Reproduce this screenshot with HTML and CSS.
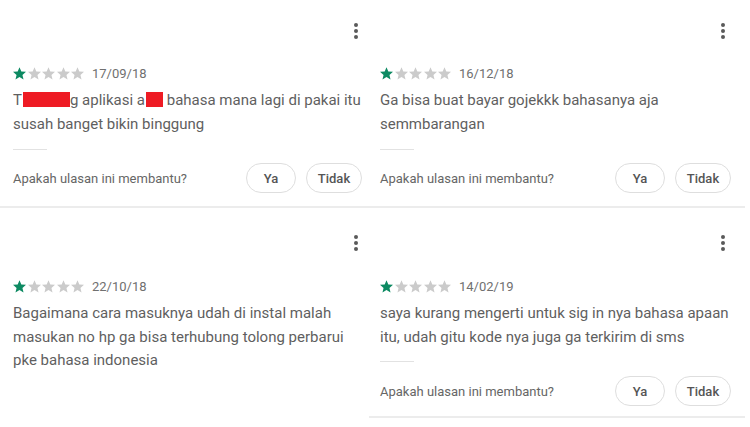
FILE: index.html
```html
<!DOCTYPE html>
<html lang="id">
<head>
    <meta charset="UTF-8">
    <meta name="viewport" content="width=device-width, initial-scale=1.0">
    <title>Ulasan</title>
    <link rel="stylesheet" href="styles.css">
</head>
<body>

    <div class="grid">

        <!-- Ulasan 1 -->
        <div class="review left top">
            <div class="review-head">
                <svg class="more" width="4" height="16" viewBox="0 0 4 16"><circle cx="2" cy="2" r="2"/><circle cx="2" cy="8" r="2"/><circle cx="2" cy="14" r="2"/></svg>
            </div>
            <div class="meta">
                <span class="stars"></span>
                <span class="date">17/09/18</span>
            </div>
            <p class="text"><span>T</span><span class="redact r1"></span><span>g aplikasi a</span><span class="redact r2"></span><span> bahasa mana lagi di pakai itu</span><br><span>susah banget bikin binggung</span></p>
            <div class="divider"></div>
            <div class="helpful">
                <span>Apakah ulasan ini membantu?</span>
                <div class="buttons">
                    <button class="ya">Ya</button>
                    <button class="tidak">Tidak</button>
                </div>
            </div>
        </div>

        <!-- Ulasan 2 -->
        <div class="review right top">
            <div class="review-head">
                <svg class="more" width="4" height="16" viewBox="0 0 4 16"><circle cx="2" cy="2" r="2"/><circle cx="2" cy="8" r="2"/><circle cx="2" cy="14" r="2"/></svg>
            </div>
            <div class="meta">
                <span class="stars"></span>
                <span class="date">16/12/18</span>
            </div>
            <p class="text">Ga bisa buat bayar gojekkk bahasanya aja semmbarangan</p>
            <div class="divider"></div>
            <div class="helpful">
                <span>Apakah ulasan ini membantu?</span>
                <div class="buttons">
                    <button class="ya">Ya</button>
                    <button class="tidak">Tidak</button>
                </div>
            </div>
        </div>

        <!-- Ulasan 3 -->
        <div class="review left bottom cut">
            <div class="review-head">
                <svg class="more" width="4" height="16" viewBox="0 0 4 16"><circle cx="2" cy="2" r="2"/><circle cx="2" cy="8" r="2"/><circle cx="2" cy="14" r="2"/></svg>
            </div>
            <div class="meta">
                <span class="stars"></span>
                <span class="date">22/10/18</span>
            </div>
            <p class="text">Bagaimana cara masuknya udah di instal malah masukan no hp ga bisa terhubung tolong perbarui pke bahasa indonesia</p>
        </div>

        <!-- Ulasan 4 -->
        <div class="review right bottom">
            <div class="review-head">
                <svg class="more" width="4" height="16" viewBox="0 0 4 16"><circle cx="2" cy="2" r="2"/><circle cx="2" cy="8" r="2"/><circle cx="2" cy="14" r="2"/></svg>
            </div>
            <div class="meta">
                <span class="stars"></span>
                <span class="date">14/02/19</span>
            </div>
            <p class="text">saya kurang mengerti untuk sig in nya bahasa apaan itu, udah gitu kode nya juga ga terkirim di sms</p>
            <div class="divider"></div>
            <div class="helpful">
                <span>Apakah ulasan ini membantu?</span>
                <div class="buttons">
                    <button class="ya">Ya</button>
                    <button class="tidak">Tidak</button>
                </div>
            </div>
        </div>

    </div>

    <script>
        // Bintang: 1 dari 5
        var starPath = 'M12 17.27L18.18 21l-1.64-7.03L22 9.24l-7.19-.61L12 2 9.19 8.63 2 9.24l5.46 4.73L5.82 21z';
        var rows = document.querySelectorAll('.stars');
        for (var i = 0; i < rows.length; i++) {
            var html = '';
            for (var s = 0; s < 5; s++) {
                html += '<svg class="star' + (s < 1 ? ' on' : '') + '" width="13" height="13" viewBox="2 2 20 19.5"><path d="' + starPath + '"/></svg>';
            }
            rows[i].innerHTML = html;
        }
    </script>

</body>
</html>
```

FILE: styles.css
```css
body {
    margin: 0;
    background-color: #fff;
    font-family: Roboto, "Liberation Sans", Arial, sans-serif;
    color: #616161;
    overflow: hidden;
}

.grid {
    display: grid;
    grid-template-columns: 369px 381px;
    grid-template-rows: 208px auto;
    width: 750px;
    height: 427px;
}

.review {
    display: flex;
    flex-direction: column;
}

.left {
    padding: 0 7px 0 13px;
}

.right {
    padding: 0 14px 0 11px;
    margin-right: 5px;
}

.top {
    padding-top: 23px;
    border-bottom: 2px solid #ececec;
}

.bottom {
    padding-top: 27px;
    border-bottom: 2px solid #ececec;
    height: 181px;
}

.cut {
    border-bottom: none;
}

.review-head {
    display: flex;
    justify-content: flex-end;
    height: 16px;
}

.left .more {
    margin-right: 4px;
}

.right .more {
    margin-right: 6px;
}

.more {
    fill: #5a5a5a;
}

.meta {
    display: flex;
    align-items: center;
    height: 14px;
    margin-top: 27px;
}

.bottom .meta {
    margin-top: 28px;
}

.stars {
    display: flex;
    gap: 1.5px;
}

.star {
    fill: #cbcbcb;
}

.star.on {
    fill: #0d8a62;
}

.date {
    margin-left: 8px;
    font-size: 13px;
    color: #707070;
}

.text {
    margin: 8px 0 0 0;
    font-size: 15px;
    line-height: 24px;
    color: #5f5f5f;
}

.bottom .text {
    margin-top: 9px;
    line-height: 23.5px;
}

.redact {
    display: inline-block;
    height: 15px;
    vertical-align: -2px;
    background-color: #ee1b24;
}

.r1 {
    width: 47px;
    margin-left: 1px;
}

.r2 {
    width: 17px;
    margin-left: 1px;
}

.divider {
    width: 34px;
    height: 1px;
    margin-top: 13px;
    background-color: #e2e2e2;
}

.bottom .divider {
    margin-top: 12px;
}

.helpful {
    display: flex;
    align-items: center;
    justify-content: space-between;
    margin-top: 13px;
    font-size: 13px;
    color: #666;
}

.bottom .helpful {
    margin-top: 14px;
}

.buttons {
    display: flex;
    gap: 10px;
}

.buttons button {
    height: 30px;
    background-color: #fff;
    border: 1px solid #dedede;
    border-radius: 15px;
    font-family: Roboto, "Liberation Sans", Arial, sans-serif;
    font-size: 13px;
    font-weight: 500;
    color: #555;
    padding: 0;
}

.ya {
    width: 50px;
}

.tidak {
    width: 56px;
}
```
